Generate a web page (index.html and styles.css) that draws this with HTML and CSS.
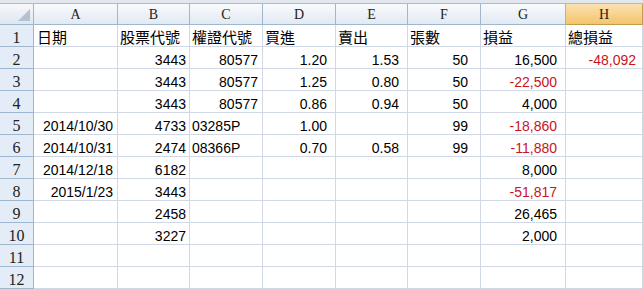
FILE: index.html
```html
<!DOCTYPE html>
<html>
<head>
<meta charset="utf-8">
<link rel="stylesheet" href="styles.css">
</head>
<body>
<div class="band"></div>
<div class="sheet">
  <div class="corner"><span class="tri"></span></div>
  <div class="ch">A</div><div class="ch">B</div><div class="ch">C</div><div class="ch">D</div><div class="ch">E</div><div class="ch">F</div><div class="ch">G</div><div class="ch sel">H</div>

  <div class="rh">1</div>
  <div class="c l cA zh">日期</div><div class="c l zh">股票代號</div><div class="c l zh">權證代號</div><div class="c l zh">買進</div><div class="c l zh">賣出</div><div class="c l zh">張數</div><div class="c l zh">損益</div><div class="c l zh">總損益</div>

  <div class="rh">2</div>
  <div class="c cA"></div><div class="c cB">3443</div><div class="c cC">80577</div><div class="c cD">1.20</div><div class="c cE">1.53</div><div class="c cF">50</div><div class="c cG">16,500</div><div class="c cH red">-48,092</div>

  <div class="rh">3</div>
  <div class="c cA"></div><div class="c cB">3443</div><div class="c cC">80577</div><div class="c cD">1.25</div><div class="c cE">0.80</div><div class="c cF">50</div><div class="c cG red">-22,500</div><div class="c cH"></div>

  <div class="rh">4</div>
  <div class="c cA"></div><div class="c cB">3443</div><div class="c cC">80577</div><div class="c cD">0.86</div><div class="c cE">0.94</div><div class="c cF">50</div><div class="c cG">4,000</div><div class="c cH"></div>

  <div class="rh">5</div>
  <div class="c cA">2014/10/30</div><div class="c cB">4733</div><div class="c l">03285P</div><div class="c cD">1.00</div><div class="c cE"></div><div class="c cF">99</div><div class="c cG red">-18,860</div><div class="c cH"></div>

  <div class="rh">6</div>
  <div class="c cA">2014/10/31</div><div class="c cB">2474</div><div class="c l">08366P</div><div class="c cD">0.70</div><div class="c cE">0.58</div><div class="c cF">99</div><div class="c cG red">-11,880</div><div class="c cH"></div>

  <div class="rh">7</div>
  <div class="c cA">2014/12/18</div><div class="c cB">6182</div><div class="c"></div><div class="c"></div><div class="c"></div><div class="c"></div><div class="c cG">8,000</div><div class="c"></div>

  <div class="rh">8</div>
  <div class="c cA">2015/1/23</div><div class="c cB">3443</div><div class="c"></div><div class="c"></div><div class="c"></div><div class="c"></div><div class="c cG red">-51,817</div><div class="c"></div>

  <div class="rh">9</div>
  <div class="c"></div><div class="c cB">2458</div><div class="c"></div><div class="c"></div><div class="c"></div><div class="c"></div><div class="c cG">26,465</div><div class="c"></div>

  <div class="rh">10</div>
  <div class="c"></div><div class="c cB">3227</div><div class="c"></div><div class="c"></div><div class="c"></div><div class="c"></div><div class="c cG">2,000</div><div class="c"></div>

  <div class="rh">11</div>
  <div class="c"></div><div class="c"></div><div class="c"></div><div class="c"></div><div class="c"></div><div class="c"></div><div class="c"></div><div class="c"></div>

  <div class="rh">12</div>
  <div class="c"></div><div class="c"></div><div class="c"></div><div class="c"></div><div class="c"></div><div class="c"></div><div class="c"></div><div class="c"></div>
</div>
</body>
</html>
```

FILE: styles.css
```css
html, body {
  margin: 0;
  padding: 0;
  background: #ffffff;
  overflow: hidden;
}
body {
  width: 643px;
  height: 289px;
}
.band {
  height: 3px;
  background: #e3e8ef;
  border-bottom: 1px solid #a9bace;
}
.sheet {
  display: grid;
  grid-template-columns: 34px 84px 72px 73px 73px 72px 73px 85px 77px;
  grid-template-rows: 21px repeat(12, 22px);
}
.sheet > div {
  box-sizing: border-box;
  border-right: 1px solid #d0d7e5;
  border-bottom: 1px solid #d0d7e5;
  overflow: visible;
  white-space: nowrap;
}
.corner {
  position: relative;
  background: linear-gradient(#f6f8fb, #dfe6ef);
  border-right: 1px solid #9eb6ce !important;
  border-bottom: 1px solid #9eb6ce !important;
}
.tri {
  position: absolute;
  right: 3px;
  bottom: 3px;
  width: 0;
  height: 0;
  border-left: 12px solid transparent;
  border-bottom: 12px solid #b3c1d2;
}
.ch {
  background: linear-gradient(#f9fbfd, #e2e9f2);
  border-right: 1px solid #9eb6ce !important;
  border-bottom: 1px solid #9eb6ce !important;
  font-family: "Liberation Serif", serif;
  font-size: 14px;
  color: #222;
  display: flex;
  align-items: center;
  justify-content: center;
  padding-top: 1px;
}
.ch.sel {
  background: linear-gradient(#fbe2b2, #f3c46b);
  border-right: 1px solid #c29b4c !important;
  border-bottom: 1px solid #c29b4c !important;
}
.rh {
  background: #e4ecf7;
  border-right: 1px solid #9eb6ce !important;
  border-bottom: 1px solid #9eb6ce !important;
  font-family: "Liberation Serif", serif;
  font-size: 16px;
  color: #222;
  text-align: center;
  line-height: 18px;
  padding-top: 4px;
}
.c {
  font-family: "Liberation Sans", "Noto Sans CJK TC", sans-serif;
  font-size: 14px;
  color: #000;
  text-align: right;
  line-height: 16px;
  padding-top: 5px;
}
.c.l {
  text-align: left;
  padding-left: 2px;
}
.c.zh {
  font-family: "Noto Sans CJK TC", sans-serif;
  font-size: 15px;
  line-height: 18px;
  padding-top: 3px;
}
.c.cA.zh { padding-left: 3px; }
.cA { padding-right: 4px; }
.cB { padding-right: 3px; }
.cC { padding-right: 4px; }
.cD { padding-right: 8px; }
.cE { padding-right: 8px; }
.cF { padding-right: 12px; }
.cG { padding-right: 8px; }
.cH { padding-right: 6px; }
.red { color: #c8141e; }
```
